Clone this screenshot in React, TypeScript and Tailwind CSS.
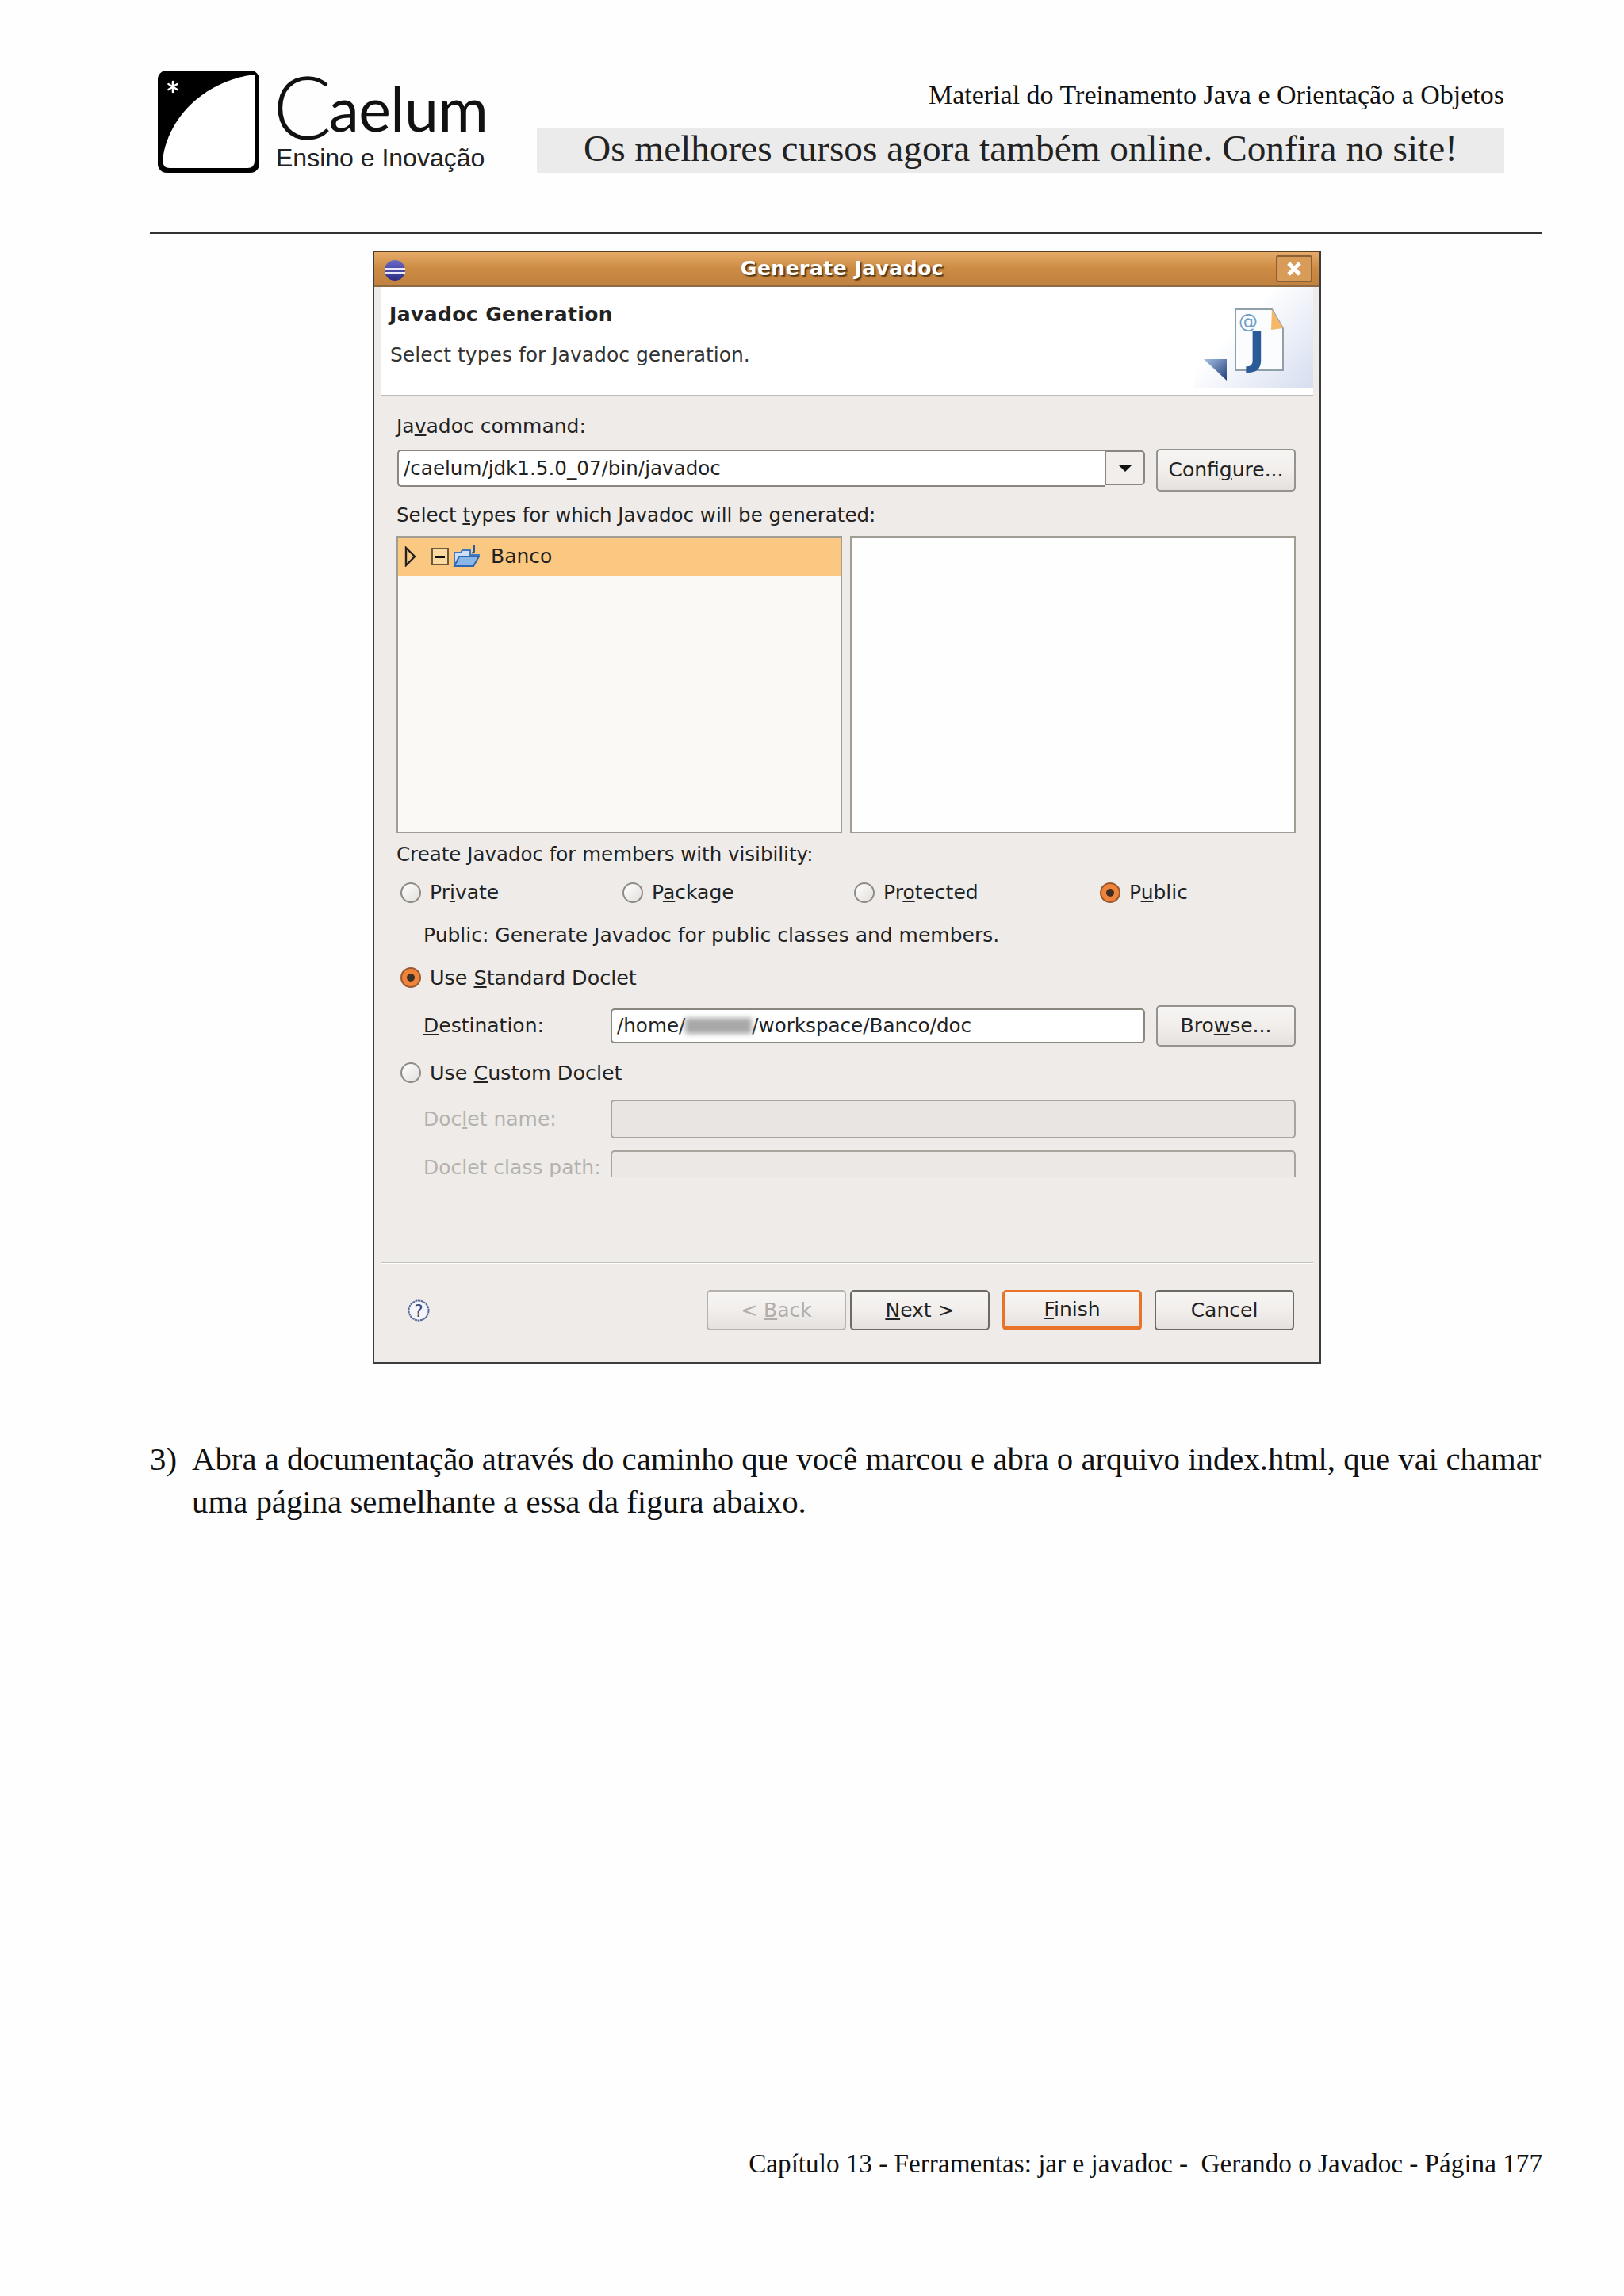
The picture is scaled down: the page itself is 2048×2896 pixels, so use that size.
import React from "react";

const Radio = ({ on }: { on?: boolean }) =>
  on ? (
    <span className="w-[26px] h-[26px] rounded-full border-2 border-[#9a5a30] bg-[#f0823a] flex items-center justify-center shrink-0">
      <span className="w-[10px] h-[10px] rounded-full bg-[#3a3028]" />
    </span>
  ) : (
    <span className="w-[26px] h-[26px] rounded-full border-2 border-[#8f8c87] bg-linear-to-br from-white to-[#e2dfdb] shrink-0" />
  );

const GButton = ({ children, cls }: { children: React.ReactNode; cls: string }) => (
  <div className={`rounded-[5px] flex items-center justify-center bg-linear-to-b from-[#f7f5f3] via-[#f1eeec] to-[#e4e1de] ${cls}`}>
    {children}
  </div>
);

export default function App() {
  return (
    <div className="w-[2048px] h-[2896px] bg-[#fefefe] flex flex-col pt-[89px] pl-[189px] pr-[103px] font-['Liberation_Serif',serif] text-[#111]">
      {/* page header */}
      <div className="flex h-[129px] shrink-0">
        <div className="flex ml-[10px]">
          <svg width="128" height="129" viewBox="0 0 128 129" className="shrink-0">
            <rect x="0" y="0" width="128" height="129" rx="11" fill="#000" />
            <path d="M6 113 C12 60 58 13 122 5 L122 114 Q122 123 113 123 L15 123 Q6 123 6 113 Z" fill="#fff" />
            <g stroke="#fff" strokeWidth="2.6" strokeLinecap="round">
              <line x1="19" y1="14" x2="19" y2="27" />
              <line x1="13.5" y1="17" x2="24.5" y2="24" />
              <line x1="24.5" y1="17" x2="13.5" y2="24" />
            </g>
          </svg>
          <div className="ml-[17px] flex flex-col w-[270px] font-['Lato',sans-serif]">
            <div className="h-[88px] flex items-end leading-none overflow-hidden">
              <span className="text-[110px] font-light leading-[88px] tracking-[-4px]">C</span>
              <span className="text-[77px] font-normal leading-[82px] tracking-[-0.5px]">aelum</span>
            </div>
            <div className="font-['Liberation_Sans',sans-serif] text-[32px] leading-[36px] text-[#222] ml-[4px] mt-[4px] whitespace-nowrap">
              Ensino e Inovação
            </div>
          </div>
        </div>
        <div className="ml-auto mr-[48px] flex flex-col items-end">
          <div className="h-[62px] text-[34px] leading-[62px] whitespace-nowrap">Material do Treinamento Java e Orientação a Objetos</div>
          <div className="mt-[11px] w-[1220px] h-[56px] pb-[5px] bg-[#ebebeb] flex items-center justify-center text-[47.3px] text-[#222] whitespace-nowrap">
            Os melhores cursos agora também online. Confira no site!
          </div>
        </div>
      </div>
      <div className="mt-[75px] h-[2px] bg-[#333] shrink-0" />

      {/* dialog */}
      <div className="mt-[21px] ml-[281px] w-[1196px] h-[1404px] shrink-0 border-2 border-t-0 border-[#3c3c3c] bg-[#eeebe9] flex flex-col font-['DejaVu_Sans',sans-serif] text-[25px] text-[#222]">
        <div className="relative h-[46px] shrink-0 pr-[12px] bg-linear-to-b from-[#e6ab69] via-[#cb8b43] to-[#c18140] border-t-2 border-b-2 border-t-[#5a3f20] border-b-[#8d6a3f] flex items-center justify-center">
          <svg width="28" height="28" viewBox="0 0 28 28" className="absolute left-[12px] top-[9px]">
            <defs>
              <linearGradient id="ec" x1="0" y1="0" x2="0" y2="1">
                <stop offset="0" stopColor="#6a6ac8" />
                <stop offset="1" stopColor="#2c2c80" />
              </linearGradient>
            </defs>
            <circle cx="14" cy="14" r="13" fill="url(#ec)" />
            <rect x="1" y="11" width="26" height="2.5" fill="#e8e8ff" />
            <rect x="1" y="16" width="26" height="2.5" fill="#e8e8ff" />
          </svg>
          <span className="font-bold text-white [text-shadow:2px_2px_2px_#4a3010] tracking-[0.5px]">Generate Javadoc</span>
          <div className="absolute right-[9px] top-[4px] w-[46px] h-[34px] border-2 border-[#8a6038] rounded-[3px] bg-[#d99c58] flex items-center justify-center">
            <svg width="20" height="20" viewBox="0 0 20 20">
              <path d="M3 3 L17 17 M17 3 L3 17" stroke="#fff" strokeWidth="5" />
            </svg>
          </div>
        </div>

        <div className="relative h-[136px] shrink-0 mx-[8px] bg-white">
          <div className="ml-[11px] pt-[17px] font-bold h-[52px] leading-[36px] tracking-[0.4px]">Javadoc Generation</div>
          <div className="ml-[12px] leading-[36px] mt-[16px] text-[#333]">Select types for Javadoc generation.</div>
          <svg width="150" height="136" viewBox="0 0 150 136" className="absolute right-0 top-0">
            <defs>
              <linearGradient id="hg" gradientUnits="userSpaceOnUse" x1="60" y1="40" x2="150" y2="125">
                <stop offset="0" stopColor="#ffffff" />
                <stop offset="1" stopColor="#d6def0" />
              </linearGradient>
              <linearGradient id="tri" x1="0" y1="0" x2="1" y2="1">
                <stop offset="0" stopColor="#a8c0e4" />
                <stop offset="1" stopColor="#1f3f78" />
              </linearGradient>
            </defs>
            <rect x="0" y="0" width="150" height="128" fill="url(#hg)" />
            <path d="M52 28 L98 28 L112 52 L112 105 L52 105 Z" fill="#fbfcfe" stroke="#90a0a8" strokeWidth="2" />
            <path d="M98 28 L112 52 L97 54 Z" fill="#f4b868" />
            <text x="56" y="52" fontFamily="DejaVu Sans" fontSize="24" fill="#6f9cc8">@</text>
            <text x="79" y="96" textAnchor="middle" fontFamily="DejaVu Sans" fontWeight="700" fontSize="56" fill="#2a5a98">J</text>
            <path d="M12 91 L41 91 L41 118 Z" fill="url(#tri)" />
          </svg>
        </div>
        <div className="mx-[8px] h-[2px] bg-[#bdbbb7] border-b border-white shrink-0" />

        <div className="flex flex-col pl-[28px] pr-[30px]">
          <div className="mt-[20px] h-[36px] leading-[36px]">Ja<u>v</u>adoc command:</div>
          <div className="mt-[10px] h-[54px] flex items-start">
            <div className="mt-[1px] ml-[1px] w-[892px] h-[47px] pt-[2px] bg-white border-2 border-r-0 border-[#8a877e] rounded-l-[5px] flex items-center pl-[6px] text-[24.6px]">
              /caelum/jdk1.5.0_07/bin/javadoc
            </div>
            <div className="mt-[2px] w-[51px] h-[44px] border-2 border-[#8a877e] rounded-r-[5px] bg-[#f1eeec] flex items-center justify-center">
              <span className="w-0 h-0 border-x-[9px] border-x-transparent border-t-[9px] border-t-[#111]" />
            </div>
            <GButton cls="ml-[14px] w-[176px] h-[54px] border-2 border-[#96938e]">
              <span>Confi<u>g</u>ure...</span>
            </GButton>
          </div>
          <div className="mt-[12px] h-[36px] leading-[36px] text-[24.5px]">Select <u>t</u>ypes for which Javadoc will be generated:</div>
          <div className="mt-[8px] h-[375px] flex justify-between">
            <div className="w-[562px] h-full bg-[#fbf9f6] border-2 border-[#a09d94]">
              <div className="h-[48px] bg-[#fbc882] flex items-center">
                <svg width="16" height="26" viewBox="0 0 16 26" className="ml-[8px]">
                  <path d="M2 2 L13 13 L2 24 Z" fill="#fbc882" stroke="#222" strokeWidth="2.4" />
                </svg>
                <div className="ml-[18px] w-[22px] h-[22px] border-2 border-[#6a5a3a] bg-[#fdd9a2] flex items-center justify-center">
                  <span className="w-[12px] h-[3px] bg-[#111]" />
                </div>
                <svg width="34" height="30" viewBox="0 0 34 30" className="ml-[5px]">
                  <path d="M2 27 L2 10 L10 10 L12 7 L22 7 L22 13 L33 13 L26 27 Z" fill="#cfe0f4" stroke="#3f78c0" strokeWidth="2" />
                  <path d="M2 27 L8 15 L33 15 L26 27 Z" fill="#8ab6e8" stroke="#2f68b0" strokeWidth="2" />
                  <path d="M27 1 L27 9 Q27 11 24 10" fill="none" stroke="#2f5a98" strokeWidth="2" />
                </svg>
                <span className="ml-[14px]">Banco</span>
              </div>
            </div>
            <div className="w-[562px] h-full bg-[#fefefe] border-2 border-[#a09d94]" />
          </div>
          <div className="mt-[9px] h-[36px] leading-[36px] text-[24.5px]">Create Javadoc for members with visibility:</div>
          <div className="mt-[12px] h-[36px] flex items-center pl-[5px]">
            <div className="w-[280px] flex items-center gap-[11px]"><Radio /><span>Pr<u>i</u>vate</span></div>
            <div className="w-[292px] flex items-center gap-[11px]"><Radio /><span>P<u>a</u>ckage</span></div>
            <div className="w-[310px] flex items-center gap-[11px]"><Radio /><span>Pr<u>o</u>tected</span></div>
            <div className="flex items-center gap-[11px]"><Radio on /><span>P<u>u</u>blic</span></div>
          </div>
          <div className="mt-[18px] h-[36px] leading-[36px] pl-[34px]">Public: Generate Javadoc for public classes and members.</div>
          <div className="mt-[17px] h-[36px] flex items-center gap-[11px] pl-[5px] text-[25.4px]"><Radio on /><span>Use <u>S</u>tandard Doclet</span></div>
          <div className="mt-[17px] h-[52px] flex items-center pl-[34px]">
            <div className="w-[236px]"><u>D</u>estination:</div>
            <div className="w-[674px] h-[44px] bg-white border-2 border-[#8a877e] rounded-[5px] flex items-center pl-[6px] whitespace-nowrap text-[24.6px]">
              /home/<span className="inline-block w-[84px] h-[20px] bg-[#a8a8a8] blur-[3px]" />/workspace/Banco/doc
            </div>
            <GButton cls="ml-[14px] w-[176px] h-[52px] border-2 border-[#96938e]">
              <span>Bro<u>w</u>se...</span>
            </GButton>
          </div>
          <div className="mt-[15px] h-[36px] flex items-center gap-[11px] pl-[5px] text-[25.4px]"><Radio /><span>Use <u>C</u>ustom Doclet</span></div>
          <div className="mt-[16px] h-[49px] flex items-center pl-[34px] text-[#b5b2ae]">
            <div className="w-[236px]">Doc<u>l</u>et name:</div>
            <div className="flex-1 h-[49px] bg-[#e9e5e2] border-2 border-[#a8a59f] rounded-[5px]" />
          </div>
          <div className="mt-[15px] h-[34px] flex items-start pl-[34px] text-[#b5b2ae] overflow-hidden">
            <div className="w-[236px] leading-[44px] whitespace-nowrap">Doclet class path:</div>
            <div className="flex-1 h-[49px] bg-[#ece8e6] border-2 border-[#a8a59f] rounded-[5px]" />
          </div>
        </div>

        <div className="mt-[107px] mx-[8px] h-[2px] bg-[#c2c0bb] border-b border-white shrink-0" />

        <div className="mt-[33px] h-[51px] flex items-center">
          <svg width="28" height="30" viewBox="0 0 28 30" className="ml-[42px]">
            <circle cx="14" cy="15" r="12.5" fill="#f4f5fa" stroke="#5a6a98" strokeWidth="2" strokeDasharray="3 0.6" />
            <text x="14" y="23" textAnchor="middle" fontFamily="DejaVu Sans" fontSize="21" fill="#3a4a78">?</text>
          </svg>
          <GButton cls="ml-[349px] w-[176px] h-[51px] border-2 border-[#b5b2ad] text-[#b0adaa]">
            <span>&lt; <u>B</u>ack</span>
          </GButton>
          <GButton cls="ml-[5px] w-[176px] h-[51px] border-2 border-[#6e6b66]">
            <span><u>N</u>ext &gt;</span>
          </GButton>
          <GButton cls="ml-[16px] w-[176px] h-[51px] border-[3px] border-b-[5px] border-[#e8742a]">
            <span><u>F</u>inish</span>
          </GButton>
          <GButton cls="ml-[16px] w-[176px] h-[51px] border-2 border-[#6e6b66]">
            <span>Cancel</span>
          </GButton>
        </div>
      </div>

      {/* paragraph */}
      <div className="mt-[94px] flex text-[40.8px] leading-[54px] whitespace-nowrap">
        <div className="w-[53px]">3)</div>
        <div>
          Abra a documentação através do caminho que você marcou e abra o arquivo index.html, que vai chamar
          <br />
          uma página semelhante a essa da figura abaixo.
        </div>
      </div>

      <div className="mt-auto pb-[140px] text-right text-[33.2px] leading-[54px] whitespace-pre">
        Capítulo 13 - Ferramentas: jar e javadoc -  Gerando o Javadoc - Página 177
      </div>
    </div>
  );
}
